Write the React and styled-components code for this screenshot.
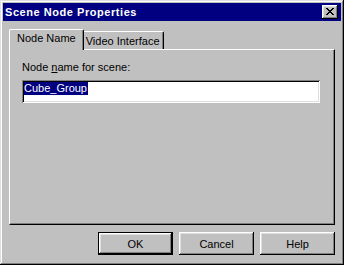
import React from "react";
import styled, { createGlobalStyle } from "styled-components";

const GlobalStyle = createGlobalStyle`
  html, body {
    margin: 0;
    padding: 0;
    background: #c0c0c0;
  }
  body {
    font-family: "Liberation Sans", Arial, sans-serif;
    font-size: 11px;
    color: #000;
  }
`;

const Window = styled.div`
  box-sizing: border-box;
  width: 344px;
  height: 265px;
  padding: 3px;
  display: flex;
  flex-direction: column;
  background: #c0c0c0;
  box-shadow: inset -1px -1px #000, inset 1px 1px #dfdfdf,
    inset -2px -2px #808080, inset 2px 2px #fff;
`;

const TitleBar = styled.div`
  height: 18px;
  display: flex;
  align-items: center;
  justify-content: space-between;
  padding: 0 3px 0 2px;
  background: #000080;
`;

const Title = styled.span`
  color: #fff;
  font-weight: bold;
  font-size: 11px;
  line-height: 18px;
  letter-spacing: 0.55px;
`;

const CloseButton = styled.div`
  box-sizing: border-box;
  width: 16px;
  height: 14px;
  display: flex;
  align-items: center;
  justify-content: center;
  padding: 0 1px 1px 0;
  background: #c0c0c0;
  box-shadow: inset -1px -1px #000, inset 1px 1px #fff,
    inset -2px -2px #808080, inset 2px 2px #dfdfdf;
`;

const Body = styled.div`
  flex: 1;
  display: flex;
  flex-direction: column;
  padding: 8px 6px 7px 6px;
`;

const Tabs = styled.div`
  display: flex;
  align-items: flex-end;
  height: 20px;
  padding-left: 2px;
`;

const Tab = styled.div`
  box-sizing: border-box;
  position: relative;
  height: ${({ $active }) => ($active ? "21px" : "18px")};
  margin: ${({ $active }) => ($active ? "0 -2px -1px -2px" : "0")};
  padding: ${({ $active }) => ($active ? "2px 7px 0 7px" : "3px 3px 0 3px")};
  z-index: ${({ $active }) => ($active ? 2 : 1)};
  line-height: 13px;
  white-space: nowrap;
  background: #c0c0c0;
  border-top: 1px solid #fff;
  border-left: 1px solid #fff;
  border-right: 1px solid #000;
  border-radius: 2px 2px 0 0;
  box-shadow: inset -1px 0 #808080;
`;

const Panel = styled.div`
  box-sizing: border-box;
  flex: 1;
  display: flex;
  flex-direction: column;
  padding: 11px 0 0 12px;
  border-top: 1px solid #fff;
  border-left: 1px solid #fff;
  border-right: 1px solid #000;
  border-bottom: 1px solid #000;
  box-shadow: inset -1px -1px #808080;
`;

const Label = styled.div`
  line-height: 13px;
`;

const Edit = styled.div`
  box-sizing: border-box;
  width: 298px;
  height: 23px;
  margin-top: 6px;
  padding: 2px;
  background: #fff;
  box-shadow: inset 1px 1px #808080, inset -1px -1px #fff,
    inset 2px 2px #000, inset -2px -2px #dfdfdf;
`;

const Selected = styled.span`
  display: inline-block;
  line-height: 13px;
  background: #000080;
  color: #fff;
  padding-right: 1px;
`;

const ButtonRow = styled.div`
  display: flex;
  justify-content: flex-end;
  gap: 6px;
  margin-top: 7px;
`;

const Button = styled.div`
  box-sizing: border-box;
  width: 75px;
  height: 23px;
  display: flex;
  align-items: center;
  justify-content: center;
  background: #c0c0c0;
  border: ${({ $default }) => ($default ? "1px solid #000" : "none")};
  box-shadow: inset -1px -1px #000, inset 1px 1px #fff,
    inset -2px -2px #808080, inset 2px 2px #dfdfdf;
`;

const CloseGlyph = () => (
  <svg width="8" height="7" viewBox="0 0 8 7" shapeRendering="crispEdges">
    <path
      d="M0 0h2v1h-2z M6 0h2v1h-2z M1 1h2v1h-2z M5 1h2v1h-2z M2 2h4v1h-4z M3 3h2v1h-2z M2 4h4v1h-4z M1 5h2v1h-2z M5 5h2v1h-2z M0 6h2v1h-2z M6 6h2v1h-2z"
      fill="#000"
    />
  </svg>
);

const App = () => {
  return (
    <>
      <GlobalStyle />
      <Window>
        <TitleBar>
          <Title>Scene Node Properties</Title>
          <CloseButton>
            <CloseGlyph />
          </CloseButton>
        </TitleBar>
        <Body>
          <Tabs>
            <Tab $active>Node Name</Tab>
            <Tab>Video Interface</Tab>
          </Tabs>
          <Panel>
            <Label>
              Node <u>n</u>ame for scene:
            </Label>
            <Edit>
              <Selected>Cube_Group</Selected>
            </Edit>
          </Panel>
          <ButtonRow>
            <Button $default>OK</Button>
            <Button>Cancel</Button>
            <Button>Help</Button>
          </ButtonRow>
        </Body>
      </Window>
    </>
  );
};

export default App;
